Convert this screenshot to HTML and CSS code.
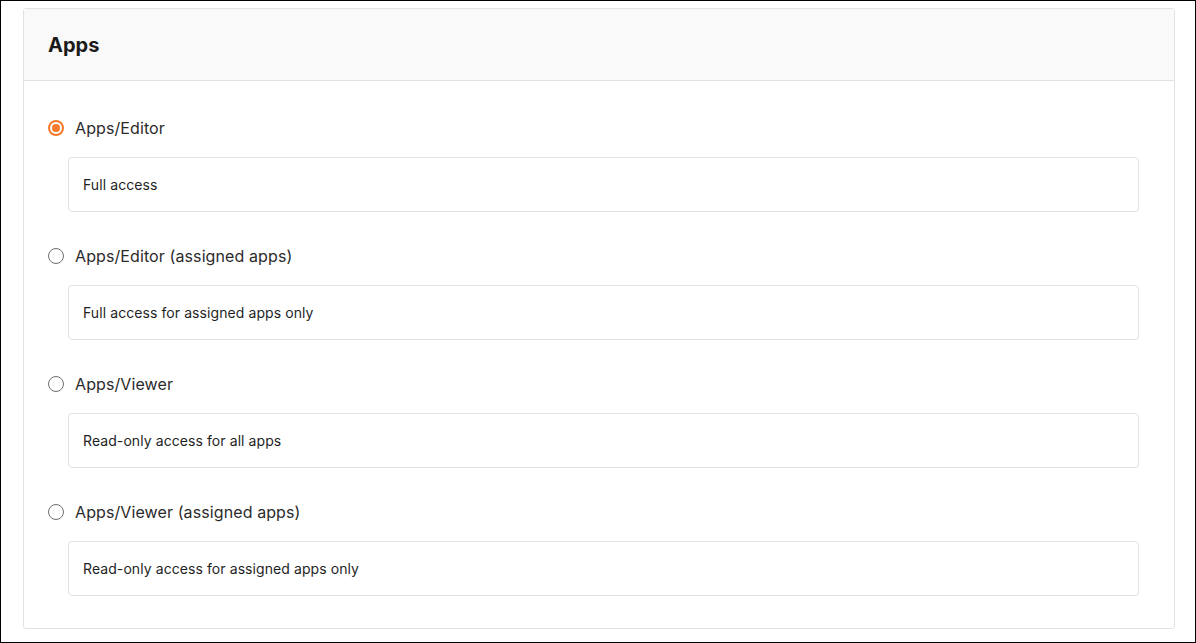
FILE: index.html
```html
<!DOCTYPE html>
<html lang="en">
<head>
<meta charset="utf-8">
<title>Apps</title>
<link rel="stylesheet" href="styles.css">
</head>
<body>
<section class="card">
  <header class="card-header"><h2 class="card-title">Apps</h2></header>
  <div class="card-body">
    <div class="option">
      <label class="option-row"><span class="radio checked"></span><span class="option-label">Apps/Editor</span></label>
      <div class="option-desc">Full access</div>
    </div>
    <div class="option">
      <label class="option-row"><span class="radio"></span><span class="option-label">Apps/Editor (assigned apps)</span></label>
      <div class="option-desc">Full access for assigned apps only</div>
    </div>
    <div class="option">
      <label class="option-row"><span class="radio"></span><span class="option-label">Apps/Viewer</span></label>
      <div class="option-desc">Read-only access for all apps</div>
    </div>
    <div class="option">
      <label class="option-row"><span class="radio"></span><span class="option-label">Apps/Viewer (assigned apps)</span></label>
      <div class="option-desc">Read-only access for assigned apps only</div>
    </div>
  </div>
</section>
</body>
</html>
```
FILE: styles.css
```css
* { box-sizing: border-box; }
html, body { margin: 0; padding: 0; }
body {
  width: 1196px;
  height: 643px;
  border: 1px solid #000;
  background: #fff;
  font-family: Inter, "Noto Sans", sans-serif;
  color: #1f1f1f;
  overflow: hidden;
}
.card {
  margin: 7px 0 0 22px;
  width: 1152px;
  height: 621px;
  border: 1px solid #e2e2e2;
  border-radius: 3px;
  background: #fff;
}
.card-header {
  height: 72px;
  background: #f9f9f9;
  border-bottom: 1px solid #e2e2e2;
  display: flex;
  align-items: center;
  padding: 0 24px;
}
.card-title {
  margin: 0;
  font-size: 20px;
  font-weight: 700;
  color: #1a1a1a;
  line-height: 24px;
}
.card-body {
  padding: 35px 24px 0 24px;
}
.option { margin-bottom: 32px; }
.option-row {
  display: flex;
  align-items: center;
  gap: 11px;
  height: 24px;
}
.radio {
  width: 16px;
  height: 16px;
  border-radius: 50%;
  border: 1.5px solid #6e6e6e;
  flex: none;
  display: flex;
  align-items: center;
  justify-content: center;
}
.radio.checked {
  border: 2px solid #f47b2a;
}
.radio.checked::after {
  content: "";
  width: 8px;
  height: 8px;
  border-radius: 50%;
  background: #f47b2a;
}
.option-label {
  font-size: 16px;
  color: #2b2b2b;
  line-height: 24px;
  letter-spacing: 0.1px;
}
.option-desc {
  margin: 17px 11px 0 20px;
  height: 55px;
  border: 1px solid #e2e2e2;
  border-radius: 4px;
  padding: 0 14px;
  display: flex;
  align-items: center;
  font-size: 14px;
  letter-spacing: 0.08px;
  color: #1f1f1f;
}
```
